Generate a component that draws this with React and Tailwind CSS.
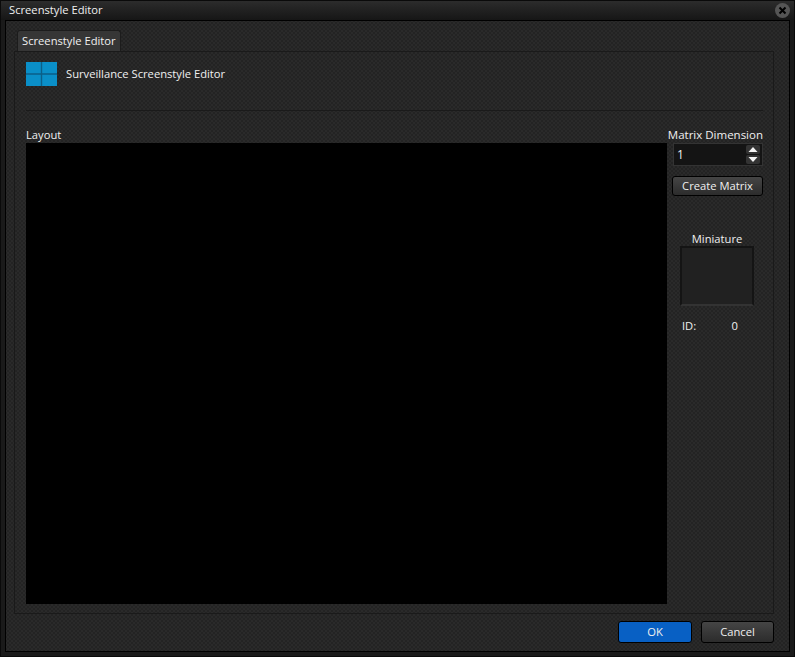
const font = { fontFamily: '"Open Sans","Noto Sans",sans-serif' };

function Tex({ className = "", children }) {
  return (
    <div className={"bg-[#2a2a2a] bg-[radial-gradient(#232323_35%,transparent_40%),radial-gradient(#232323_35%,transparent_40%)] bg-[length:4px_4px] bg-[position:0_0,2px_2px] " + className}>
      {children}
    </div>
  );
}

function Btn({ children, className = "" }) {
  return (
    <button className={"flex items-center justify-center rounded-[3px] border border-black text-[11.2px] text-[#f0f0f0] " + className}>
      {children}
    </button>
  );
}

export default function App() {
  return (
    <div style={font} className="w-[795px] h-[657px] flex flex-col bg-[#1a1a1a] border border-[#0a0a0a] overflow-hidden text-[11.2px] text-[#f0f0f0]">
      <div className="h-[19px] shrink-0 flex items-center justify-between pl-2 pr-[4px] bg-gradient-to-b from-[#2c2c2c] to-[#161616]">
        <span className="text-[11.2px]">Screenstyle Editor</span>
        <span className="w-[15px] h-[15px] rounded-full bg-[#555] flex items-center justify-center">
          <svg width="9" height="9" viewBox="0 0 9 9"><path d="M1.5 1.5L7.5 7.5M7.5 1.5L1.5 7.5" stroke="#000" strokeWidth="2" /></svg>
        </span>
      </div>
      <div className="flex-1 mx-[4px] mb-[4px] border border-black flex">
        <Tex className="flex-1 flex flex-col pt-[9px] pl-[8px] pr-[15px]">
          <div className="h-[21px] flex">
            <div className="w-[104px] ml-[3px] rounded-t-[3px] bg-[#363636] border border-b-0 border-[#1c1c1c] flex items-center pl-[4px] text-[11.2px]">Screenstyle Editor</div>
          </div>
          <div className="h-[563px] border border-[#1a1a1a] flex flex-col pl-[11px] pr-[10px]">
            <div className="h-[59px] shrink-0 flex items-start pt-[10px] border-b border-[#1a1a1a]">
              <svg width="31" height="24" viewBox="0 0 31 24" className="shrink-0">
                <rect width="31" height="24" fill="#0a8fc8" />
                <path d="M15.5 0V24M0 12H31" stroke="#0b5f88" strokeWidth="1.4" />
              </svg>
              <span className="ml-[9px] mt-[4px]">Surveillance Screenstyle Editor</span>
            </div>
            <div className="flex-1 flex mt-[16px] mb-[9px]">
              <div className="w-[641px] flex flex-col">
                <div className="h-[16px] leading-[16px]">Layout</div>
                <div className="flex-1 bg-black" />
              </div>
              <div className="flex-1 flex flex-col items-end">
                <div className="h-[16px] leading-[16px] whitespace-nowrap text-[11.5px]">Matrix Dimension</div>
                <div className="w-[90px] h-[23px] bg-[#141414] border border-[#333] flex items-center justify-between pl-[3px] pr-[2px]">
                  <span className="text-[12px]">1</span>
                  <div className="flex flex-col gap-[1px]">
                    <svg width="14" height="9" viewBox="0 0 14 9"><rect width="14" height="9" rx="2" fill="#333" /><path d="M2.5 7L7 2L11.5 7Z" fill="#f5f5f5" /></svg>
                    <svg width="14" height="9" viewBox="0 0 14 9"><rect width="14" height="9" rx="2" fill="#333" /><path d="M2.5 2L7 7L11.5 2Z" fill="#f5f5f5" /></svg>
                  </div>
                </div>
                <Btn className="mt-[10px] w-[91px] h-[20px] bg-gradient-to-b from-[#454545] to-[#2c2c2c]">Create Matrix</Btn>
                <div className="w-[90px] mr-[1px] flex flex-col items-center mt-[35px]">
                  <div className="h-[15px] leading-[15px]">Miniature</div>
                  <div className="w-[74px] h-[60px] bg-[#212121] border-2 border-t-[#141414] border-l-[#141414] border-r-[#141414] border-b-[#333]" />
                </div>
                <div className="w-[90px] mt-[12px] pl-[9px] pr-[25px] flex justify-between">
                  <span>ID:</span><span>0</span>
                </div>
              </div>
            </div>
          </div>
          <div className="flex-1 flex justify-end items-start pt-[7px] gap-[9px]">
            <Btn className="w-[74px] h-[22px] bg-[#0860c4] border-[#0a2a55]">OK</Btn>
            <Btn className="w-[73px] h-[22px] bg-gradient-to-b from-[#454545] to-[#2c2c2c]">Cancel</Btn>
          </div>
        </Tex>
      </div>
    </div>
  );
}
